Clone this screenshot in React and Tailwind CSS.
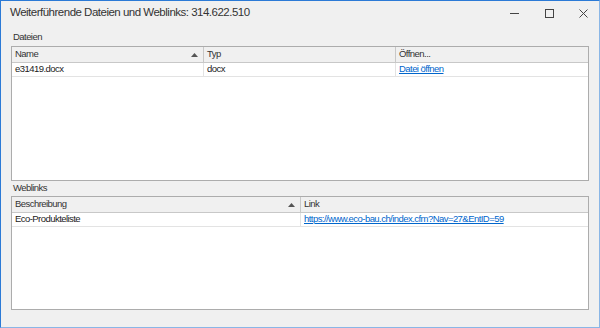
import React from "react";

const font = { fontFamily: '"Liberation Sans", Arial, sans-serif' };

function SortArrow() {
  return (
    <svg width="7" height="4" viewBox="0 0 7 4" className="shrink-0">
      <path d="M0 4 L3.5 0 L7 4 Z" fill="#555" />
    </svg>
  );
}

function Grid({ cols, rows, height }) {
  return (
    <div
      className="border border-[#acacac] bg-white flex flex-col"
      style={{ height }}
    >
      <div className="flex h-[16px] bg-[#f0f0f0] border-b border-[#c8c8c8]">
        {cols.map((c, i) => (
          <div
            key={i}
            className={`flex items-center justify-between px-[3px] text-[9.5px] tracking-[-0.55px] text-[#333] ${
              i < cols.length - 1 ? "border-r border-[#c8c8c8]" : ""
            }`}
            style={{ width: c.w, flex: c.w ? "none" : "1" }}
          >
            <span>{c.label}</span>
            {c.sort && <span className="mr-[2px]"><SortArrow /></span>}
          </div>
        ))}
      </div>
      {rows.map((r, ri) => (
        <div key={ri} className="flex h-[14px] border-b border-[#e3e3e3]">
          {r.map((cell, i) => (
            <div
              key={i}
              className={`flex items-center px-[3px] text-[9.5px] tracking-[-0.55px] ${
                i < r.length - 1 ? "border-r border-[#e3e3e3]" : ""
              } ${cell.link ? "text-[#0066cc] underline" : "text-[#222]"}`}
              style={{ width: cols[i].w, flex: cols[i].w ? "none" : "1" }}
            >
              {cell.text}
            </div>
          ))}
        </div>
      ))}
    </div>
  );
}

export default function App() {
  return (
    <div
      className="w-[600px] h-[328px] bg-[#f0f0f0] border-t border-l border-r border-b border-t-[#2b7ad6] border-l-[#2b7ad6] border-r-[#8ab6e6] border-b-[#8ab6e6] flex flex-col overflow-hidden"
      style={font}
    >
      <div className="h-[24px] flex items-center pl-[9px] shrink-0">
        <div className="flex-1 text-[11.5px] tracking-[-0.5px] text-[#333]">
          Weiterführende Dateien und Weblinks: 314.622.510
        </div>
        <div className="flex items-center h-full">
          <div className="w-[35px] flex justify-center">
            <svg width="9" height="9" viewBox="0 0 9 9">
              <path d="M0 4.5 H9" stroke="#444" strokeWidth="1" />
            </svg>
          </div>
          <div className="w-[35px] flex justify-center">
            <svg width="9" height="9" viewBox="0 0 9 9">
              <rect x="0.5" y="0.5" width="8" height="8" fill="none" stroke="#444" strokeWidth="1" />
            </svg>
          </div>
          <div className="w-[32px] flex justify-center">
            <svg width="9" height="9" viewBox="0 0 9 9">
              <path d="M0.5 0.5 L8.5 8.5 M8.5 0.5 L0.5 8.5" stroke="#444" strokeWidth="1" />
            </svg>
          </div>
        </div>
      </div>
      <div className="flex flex-col px-[10px]">
        <div className="h-[21px] flex items-end pb-[2px] pl-[2px] text-[9.5px] tracking-[-0.55px] text-[#333]">Dateien</div>
        <Grid
          height={135}
          cols={[
            { label: "Name", w: 192, sort: true },
            { label: "Typ", w: 192 },
            { label: "Öffnen..." },
          ]}
          rows={[[{ text: "e31419.docx" }, { text: "docx" }, { text: "Datei öffnen", link: true }]]}
        />
        <div className="h-[15px] flex items-end pb-[1px] pl-[2px] text-[9.5px] tracking-[-0.55px] text-[#333]">Weblinks</div>
        <Grid
          height={114}
          cols={[
            { label: "Beschreibung", w: 289, sort: true },
            { label: "Link" },
          ]}
          rows={[[
            { text: "Eco-Produkteliste" },
            { text: "https://www.eco-bau.ch/index.cfm?Nav=27&EntID=59", link: true },
          ]]}
        />
      </div>
    </div>
  );
}
